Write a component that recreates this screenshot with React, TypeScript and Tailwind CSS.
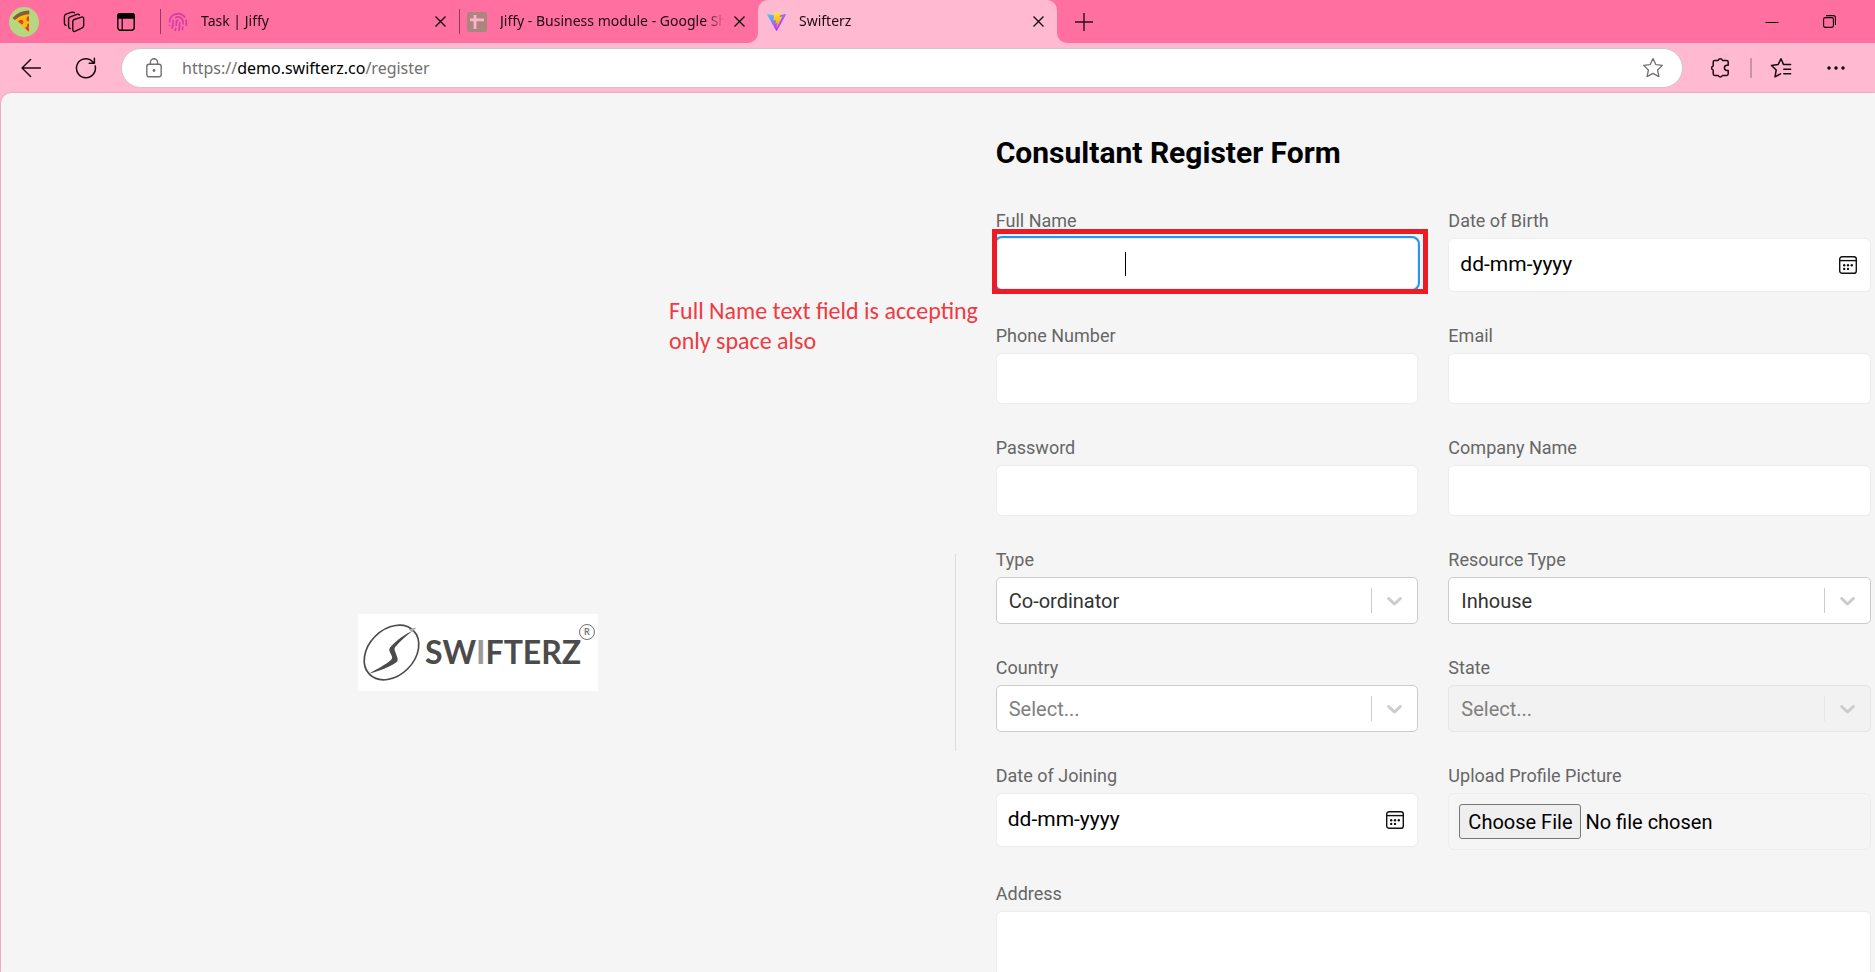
import type { ReactNode } from 'react';
import { Fingerprint } from 'lucide-react';

type FieldProps = { id: string; label: string; children: ReactNode; wide?: boolean };

const boxClass =
  'h-[51px] w-full rounded-md border border-[#ededed] bg-white px-3 text-xl text-black outline-none';

function Field({ id, label, children, wide }: FieldProps) {
  return (
    <div className={wide ? 'col-span-2' : 'min-w-0'}>
      <label htmlFor={id} className="mb-[5px] block text-lg leading-6 text-[#666666]">
        {label}
      </label>
      {children}
    </div>
  );
}

function TextField({ id, label, type = 'text' }: { id: string; label: string; type?: string }) {
  return (
    <Field id={id} label={label}>
      <input id={id} type={type} className={boxClass} />
    </Field>
  );
}

function CalendarIcon() {
  return (
    <svg viewBox="0 0 18 18" className="size-[18px]" fill="none" stroke="#111" strokeWidth="1.4">
      <rect x="0.7" y="0.7" width="16.6" height="16.6" rx="2.4" />
      <path d="M0.7 4.6h16.6" />
      <g fill="#111" stroke="none">
        <circle cx="5.2" cy="9.3" r="1.2" />
        <circle cx="9" cy="9.3" r="1.2" />
        <circle cx="12.8" cy="9.3" r="1.2" />
        <circle cx="5.2" cy="12.9" r="1.2" />
        <circle cx="9" cy="12.9" r="1.2" />
      </g>
    </svg>
  );
}

function DateField({ id, label }: { id: string; label: string }) {
  return (
    <Field id={id} label={label}>
      <div className="flex h-[54px] items-center rounded-md border border-[#ededed] bg-white pr-[13px] pl-[11px]">
        <input
          id={id}
          type="text"
          placeholder="dd-mm-yyyy"
          className="min-w-0 flex-1 bg-transparent text-[21px] text-black outline-none placeholder:text-black"
        />
        <button type="button" aria-label={`Pick ${label}`}>
          <CalendarIcon />
        </button>
      </div>
    </Field>
  );
}

type SelectProps = { id: string; label: string; value: string; empty?: boolean; disabled?: boolean };

function SelectField({ id, label, value, empty, disabled }: SelectProps) {
  const tone = disabled ? 'border-[#e6e6e6] bg-[#f2f2f2]' : 'border-[#cccccc] bg-white';
  const text = empty ? 'text-[#808080]' : 'text-[#333333]';
  return (
    <Field id={id} label={label}>
      <div className="grid">
        <select
          id={id}
          disabled={disabled}
          className={`col-start-1 row-start-1 h-[47px] w-full appearance-none rounded-[5px] border pr-12 pl-3 text-xl opacity-100 outline-none ${tone} ${text}`}
        >
          <option>{value}</option>
        </select>
        <span className="pointer-events-none col-start-1 row-start-1 flex items-center gap-2.5 self-center justify-self-end pr-[11px]">
          <span className={`h-[25px] w-px ${disabled ? 'bg-[#e6e6e6]' : 'bg-[#cccccc]'}`} />
          <svg viewBox="0 0 20 20" className="size-[25px]" fill="#cccccc">
            <path d="M4.516 7.548c0.436-0.446 1.043-0.481 1.576 0l3.908 3.747 3.908-3.747c0.533-0.481 1.141-0.446 1.574 0 0.436 0.445 0.408 1.197 0 1.615-0.406 0.418-4.695 4.502-4.695 4.502-0.217 0.223-0.502 0.335-0.787 0.335s-0.57-0.112-0.789-0.335c0 0-4.287-4.084-4.695-4.502s-0.436-1.17 0-1.615z" />
          </svg>
        </span>
      </div>
    </Field>
  );
}

function PizzaAvatar() {
  return (
    <svg viewBox="0 0 30 30" className="size-[30px]">
      <circle cx="15" cy="15" r="15" fill="#b5d77f" />
      <path d="M6 12.2C9.6 8.8 14 7 20 6.8V25.6Z" fill="#fdb813" />
      <path d="M4 10.6C8.4 5.8 13.6 3.4 19.6 3.4Q20.3 3.4 20.3 4.2V7.2C14.6 7.4 10.4 9 6.6 12.6Q5.8 13.2 5.2 12.6L4 11.6Q3.6 11.1 4 10.6Z" fill="#8a5a3c" />
      <path d="M20 9.2a2.6 2.6 0 0 0 0 5.2ZM10.6 13.2a2.4 2.4 0 0 1 3.4 3.3l-1.2 1.1L9 14.4ZM20 16.6a2 2 0 0 0 0 4Z" fill="#d8431f" />
      <path d="M16.4 20.4a2 2 0 0 1 3.6 1.2v3.2l-3.4-3Z" fill="#d8431f" />
    </svg>
  );
}

function WorkspacesIcon() {
  return (
    <svg viewBox="0 0 22 22" className="size-[22px]" fill="none" stroke="#1b0a10" strokeWidth="1.4" strokeLinejoin="round" strokeLinecap="round">
      <path d="M11.2 8.5 18.6 6.1Q20.6 5.6 20.7 7.6V14.6Q20.7 16.2 19.2 16.9L12.4 20.2Q10 21.2 9.8 18.8V10.6Q9.8 9 11.2 8.5Z" />
      <path d="M7.2 17.6Q5.6 17.4 5.6 15.6V8Q5.6 6.4 7.2 5.8L14 3.3Q15.6 2.8 16.4 4" />
      <path d="M3 14.4Q1.4 14 1.4 12.2V5.4Q1.4 3.9 3 3.2L8.9 1.2Q10.6 0.8 11.4 1.8" />
    </svg>
  );
}

function TabActionsIcon() {
  return (
    <svg viewBox="0 0 18 18" className="size-[18px]" fill="none" stroke="#000" strokeWidth="1.4">
      <rect x="0.8" y="0.8" width="16.4" height="16.4" rx="2.6" />
      <path d="M0.8 5V3Q0.8 0.8 3 0.8H15Q17.2 0.8 17.2 3V5Z" fill="#000" />
      <path d="M5.2 5V17" strokeWidth="1.2" />
    </svg>
  );
}

function ViteLogo() {
  return (
    <svg viewBox="0 0 256 257" className="size-[19px]">
      <defs>
        <linearGradient id="vite-body" x1="-0.8%" x2="57.6%" y1="7.7%" y2="78.4%">
          <stop offset="0%" stopColor="#41D1FF" />
          <stop offset="100%" stopColor="#BD34FE" />
        </linearGradient>
        <linearGradient id="vite-bolt" x1="43.4%" x2="50.3%" y1="2.2%" y2="89%">
          <stop offset="0%" stopColor="#FFEA83" />
          <stop offset="8.3%" stopColor="#FFDD35" />
          <stop offset="100%" stopColor="#FFA800" />
        </linearGradient>
      </defs>
      <path fill="url(#vite-body)" d="M255.153 37.938L134.897 252.976c-2.483 4.44-8.862 4.466-11.382.048L.875 37.958c-2.746-4.814 1.371-10.646 6.827-9.67l120.385 21.517a6.537 6.537 0 0 0 2.322-.004l117.867-21.483c5.438-.991 9.574 4.796 6.877 9.62Z" />
      <path fill="url(#vite-bolt)" d="M185.432.063L96.44 17.501a3.268 3.268 0 0 0-2.634 3.014l-5.474 92.456a3.268 3.268 0 0 0 3.997 3.378l24.777-5.718c2.318-.535 4.413 1.507 3.936 3.838l-7.361 36.047c-.495 2.426 1.782 4.5 4.151 3.78l15.304-4.649c2.372-.72 4.652 1.36 4.15 3.788l-11.698 56.621c-.732 3.542 3.979 5.473 5.943 2.437l1.313-2.028l72.516-144.72c1.215-2.423-.88-5.186-3.54-4.672l-25.505 4.922c-2.396.462-4.435-1.77-3.759-4.114l16.646-57.705c.677-2.35-1.37-4.583-3.769-4.113Z" />
    </svg>
  );
}

function SheetIcon() {
  return (
    <svg viewBox="0 0 20 20" className="size-5">
      <rect width="20" height="20" rx="2" fill="#ab8580" />
      <path d="M6.6 3h2.8v3.6H17v2.6H9.4V17H6.6V9.2H3V6.6h3.6Z" fill="#ffb3cb" />
    </svg>
  );
}

function Tab({ icon, title }: { icon: ReactNode; title: string }) {
  return (
    <div className="flex h-full w-[299px] items-center pr-3 pl-2">
      <span className="flex w-5 shrink-0 justify-center">{icon}</span>
      <span className="ml-[13px] min-w-0 flex-1 overflow-hidden pb-0.5 text-sm whitespace-nowrap text-[#1b0a10] [mask-image:linear-gradient(to_right,#000_calc(100%-20px),transparent)]">
        {title}
      </span>
      <button type="button" aria-label={`Close ${title}`} className="ml-2 p-px">
        <svg viewBox="0 0 11 11" className="size-[11px]" stroke="#111" strokeWidth="1.4">
          <path d="M0.5 0.5 10.5 10.5M10.5 0.5 0.5 10.5" />
        </svg>
      </button>
    </div>
  );
}

function TabStrip() {
  return (
    <div className="flex h-[43px] bg-[#ffbad1]">
      <div className="flex items-center rounded-br-[10px] bg-[#ff70a1]">
        <button type="button" aria-label="Profile" className="ml-[9px]">
          <PizzaAvatar />
        </button>
        <button type="button" aria-label="Workspaces" className="ml-6">
          <WorkspacesIcon />
        </button>
        <button type="button" aria-label="Tab actions" className="mr-[25px] ml-8">
          <TabActionsIcon />
        </button>
        <span className="-mr-px h-[25px] w-px bg-[#8c3d58]" />
        <Tab icon={<Fingerprint size={20} color="#d93ba6" strokeWidth={2} />} title="Task | Jiffy" />
        <span className="-mr-px h-[25px] w-px bg-[#8c3d58]" />
        <Tab icon={<SheetIcon />} title="Jiffy - Business module - Google Sheets" />
      </div>
      <div className="bg-[#ff70a1]">
        <div className="h-full rounded-t-[10px] bg-[#ffbad1]">
          <Tab icon={<ViteLogo />} title="Swifterz" />
        </div>
      </div>
      <div className="flex flex-1 items-center rounded-bl-[10px] bg-[#ff70a1] pl-[18px]">
        <button type="button" aria-label="New tab">
          <svg viewBox="0 0 18 18" className="size-[18px]" stroke="#2a1219" strokeWidth="1.4">
            <path d="M9 0V18M0 9H18" />
          </svg>
        </button>
        <span className="flex-1" />
        <button type="button" aria-label="Minimize">
          <svg viewBox="0 0 14 14" className="size-3.5" stroke="#000">
            <path d="M0.5 7.5H13.5" />
          </svg>
        </button>
        <button type="button" aria-label="Restore" className="mr-[39px] ml-11">
          <svg viewBox="0 0 13 13" className="size-[13px]" fill="none" stroke="#000" strokeWidth="1.1">
            <rect x="0.6" y="2.6" width="9.8" height="9.8" rx="1.6" />
            <path d="M3 0.6H10.4Q12.4 0.6 12.4 2.6V10" />
          </svg>
        </button>
      </div>
    </div>
  );
}

function Toolbar() {
  return (
    <div className="flex h-[50px] items-center bg-[#ffbad1]">
      <button type="button" aria-label="Back" className="ml-[21px]">
        <svg viewBox="0 0 20 20" className="size-5" fill="none" stroke="#1b0a10" strokeWidth="1.4" strokeLinecap="round" strokeLinejoin="round">
          <path d="M9.6 1.4 1 10 9.6 18.6M1 10H19.6" />
        </svg>
      </button>
      <button type="button" aria-label="Refresh" className="ml-[34px]">
        <svg viewBox="0 0 22 22" className="size-[22px]" fill="none" stroke="#1b0a10" strokeWidth="1.5" strokeLinecap="round" strokeLinejoin="round">
          <path d="M20.2 9A9.5 9.5 0 1 1 15 2.6L19.2 6M19.4 1.2V6.2H14.2" />
        </svg>
      </button>
      <div className="ml-6 flex h-10 flex-1 items-center rounded-full border border-[#cfc6ca] bg-white pr-[18px] pl-6">
        <svg viewBox="0 0 16 20" className="h-5 w-4 shrink-0" fill="none" stroke="#707070" strokeWidth="1.4">
          <rect x="0.8" y="6.2" width="14.4" height="12.6" rx="2.2" />
          <path d="M4.4 6.2V4.4a3.6 3.6 0 0 1 7.2 0V6.2" />
          <circle cx="8" cy="12.5" r="1.4" fill="#707070" stroke="none" />
        </svg>
        <a href="https://demo.swifterz.co/register" className="ml-5 flex-1 text-base text-[#707070]">
          https://<span className="text-black">demo.swifterz.co</span>/register
        </a>
        <button type="button" aria-label="Add to favorites">
          <svg viewBox="0 0 22 22" className="size-[22px]" fill="none" stroke="#707070" strokeWidth="1.3" strokeLinejoin="round">
            <path d="M11 1.6 13.8 7.6 20.4 8.4 15.6 13 16.9 19.6 11 16.4 5.1 19.6 6.4 13 1.6 8.4 8.2 7.6Z" />
          </svg>
        </button>
      </div>
      <button type="button" aria-label="Extensions" className="ml-[27px]">
        <svg viewBox="0 0 20 22" className="h-[22px] w-5" fill="none" stroke="#1b0a10" strokeWidth="1.5" strokeLinejoin="round">
          <path d="M4.8 3.4H8.2A2.2 2.2 0 0 1 12.4 3.4H16.6Q18.2 3.4 18.2 5V8.2H17A2.6 2.6 0 0 0 17 13.4H18.2V16.8Q18.2 18.4 16.6 18.4H12.4A2.2 2.2 0 0 1 8.2 18.4H4.8Q3.2 18.4 3.2 16.8V13.2A2.2 2.2 0 0 1 3.2 9V5Q3.2 3.4 4.8 3.4Z" />
        </svg>
      </button>
      <span className="ml-5 h-5 w-0.5 bg-[#c793a5]" />
      <button type="button" aria-label="Favorites" className="ml-[18px]">
        <svg viewBox="0 0 22 22" className="size-[22px]" fill="none" stroke="#1b0a10" strokeWidth="1.5" strokeLinejoin="round" strokeLinecap="round">
          <path d="M20.6 7.6H13.6L11 1.8 8.2 7.4 1.4 8.4 6.2 13 5 19.8 10.6 16.8M13.8 12.2H20.6M13.8 16.8H20.6" />
        </svg>
      </button>
      <button type="button" aria-label="More" className="mr-[30px] ml-[35px]">
        <svg viewBox="0 0 18 4" className="h-1 w-[18px]" fill="#000">
          <circle cx="2" cy="2" r="1.7" />
          <circle cx="9" cy="2" r="1.7" />
          <circle cx="16" cy="2" r="1.7" />
        </svg>
      </button>
    </div>
  );
}

function SwifterzLogo() {
  return (
    <svg viewBox="0 0 240 77" className="h-[77px] w-60 bg-white" role="img" aria-label="Swifterz">
      <ellipse cx="33.5" cy="38.5" rx="31" ry="23" fill="none" stroke="#4b4b4b" strokeWidth="1.7" transform="rotate(-45 33.5 38.5)" />
      <path d="M54.5 17C47 20 38 26.5 32 33.5Q30.6 35.3 31.6 37.5L34 42.6Q34.6 44.4 33.2 45.8C28 50.5 20 54.5 11.5 59.5C22 57 31.5 53 38 48.6Q40.3 46.8 39.6 44.3L36.6 36Q36.2 34.3 37.4 32.8C42 27.5 48 22 54.5 17Z" fill="#4b4b4b" />
      <path d="M50.5 15.2 58.5 13.6 54 18.2Z" fill="#a9a9a9" />
      <text x="67" y="50" fill="#4b4b4b" className="font-['Lato'] text-[32px] font-bold">
        SW<tspan fill="#9b9b9b">I</tspan>FTERZ
      </text>
      <circle cx="229" cy="18" r="7.5" fill="none" stroke="#5f5f5f" strokeWidth="0.9" />
      <text x="229" y="21" textAnchor="middle" fill="#777" className="font-['Lato'] text-[9px] leading-none font-bold">
        R
      </text>
    </svg>
  );
}

function RegisterForm() {
  return (
    <form className="flex-1 pt-10 pr-1 pb-10 pl-10">
      <h1 className="mb-9 text-3xl leading-10 font-bold text-black">Consultant Register Form</h1>
      <div className="grid grid-cols-2 gap-x-[30px] gap-y-8">
        <Field id="full-name" label="Full Name">
          <div className="relative">
            <input
              id="full-name"
              type="text"
              defaultValue="                        "
              className={`${boxClass} relative ring-2 ring-[#2196f3]`}
            />
            <span className="absolute top-3.5 left-[129px] h-6 w-px bg-black" />
            <span className="pointer-events-none absolute -top-[9px] -right-2.5 -bottom-[5px] -left-1 border-[5px] border-[#ed1c24]" />
          </div>
        </Field>
        <DateField id="birth-date" label="Date of Birth" />
        <TextField id="phone" label="Phone Number" type="tel" />
        <TextField id="email" label="Email" type="email" />
        <TextField id="password" label="Password" type="password" />
        <TextField id="company" label="Company Name" />
        <SelectField id="type" label="Type" value="Co-ordinator" />
        <SelectField id="resource-type" label="Resource Type" value="Inhouse" />
        <SelectField id="country" label="Country" value="Select..." empty />
        <SelectField id="state" label="State" value="Select..." empty disabled />
        <DateField id="joining-date" label="Date of Joining" />
        <Field id="picture" label="Upload Profile Picture">
          <input
            id="picture"
            type="file"
            className="block h-[57px] w-full rounded-md border border-[#ededed] p-2.5 text-xl leading-[35px] text-black file:h-[35px] file:rounded-[3px] file:border file:border-[#767676] file:bg-[#efefef] file:px-2"
          />
        </Field>
        <Field id="address" label="Address" wide>
          <textarea
            id="address"
            className="block h-[260px] w-full resize-none rounded-md border border-[#ededed] bg-white p-3 text-xl outline-none"
          />
        </Field>
      </div>
    </form>
  );
}

export default function App() {
  return (
    <div className="flex h-screen flex-col overflow-hidden bg-[#ffbad1] font-['Noto_Sans',sans-serif]">
      <header className="shrink-0">
        <TabStrip />
        <Toolbar />
      </header>
      <main className="relative ml-px flex flex-1 items-start overflow-hidden rounded-tl-[10px] bg-[#f5f5f5] font-['Roboto',sans-serif] shadow-[0_0_2px_#c98ba0]">
        <div className="flex w-full shrink-0 items-center">
          <div className="flex w-[calc(51%-2px)] items-center justify-center">
            <SwifterzLogo />
          </div>
          <span className="h-[197px] w-px bg-[#dddddd]" />
          <RegisterForm />
        </div>
        <p className="absolute top-[203px] left-[668px] w-80 font-['Carlito','Lato',sans-serif] text-2xl leading-[30px] text-[#f03a42]">
          Full Name text field is accepting only space also
        </p>
      </main>
    </div>
  );
}
